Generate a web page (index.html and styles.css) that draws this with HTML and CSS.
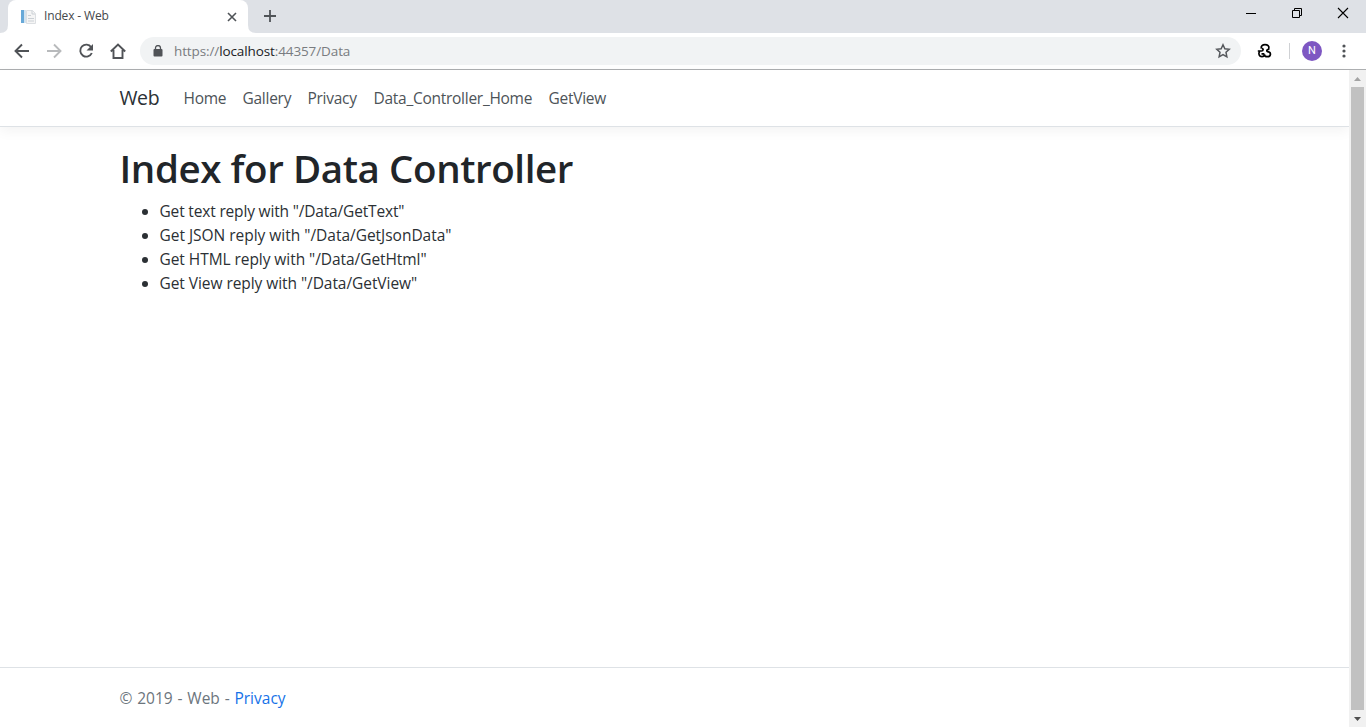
FILE: index.html
```html
<!DOCTYPE html>
<html lang="en">
<head>
<meta charset="utf-8">
<title>Index - Web</title>
<link rel="stylesheet" href="styles.css">
</head>
<body>
<div class="tabstrip">
  <svg class="foot" width="8" height="33"><path d="M0 33Q8 33 8 25V33Z" fill="#fff"/></svg>
  <div class="tab">
    <svg class="favicon" width="16" height="16" viewBox="0 0 16 16"><path d="M1 1h3v13H1z" fill="#68a9d8"/><path d="M4 1h2v13H4z" fill="#d3e3ef"/><path d="M6.500 1.500h6l3 3v10h-9z" fill="#f5f5f5" stroke="#dcdfe2"/><path d="M12 1.500v3.500h3M8 6.500h3M8 9.500h6M8 12h6" fill="none" stroke="#cbd0d5"/></svg>
    <span class="tab-title">Index - Web</span>
    <svg class="tab-close" width="10" height="10" viewBox="0 0 10 10"><path d="M1 1l8 8M9 1L1 9" stroke="#4f5357" stroke-width="1.6"/></svg>
  </div>
  <svg class="foot" width="8" height="33"><path d="M8 33Q0 33 0 25V33Z" fill="#fff"/></svg>
  <svg class="new-tab" width="12" height="12" viewBox="0 0 12 12"><path d="M6 0v12M0 6h12" stroke="#4f5357" stroke-width="1.8"/></svg>
  <div class="window-controls">
    <svg width="46" height="27" viewBox="0 0 46 27"><path d="M18 13.5h10" stroke="#000"/></svg>
    <svg width="46" height="27" viewBox="0 0 46 27"><path d="M18.500 10.500h7v7h-7zM20.500 10.500v-2h7v7h-2" fill="none" stroke="#000"/></svg>
    <svg width="46" height="27" viewBox="0 0 46 27"><path d="M18 8l10 10M28 8L18 18" stroke="#000" stroke-width="1.1"/></svg>
  </div>
</div>
<div class="toolbar">
  <svg class="tool" width="16" height="16" viewBox="0 0 16 16"><path d="M15 8H2M8 1.500L1.500 8 8 14.500" fill="none" stroke="#505357" stroke-width="1.900"/></svg>
  <svg class="tool" width="16" height="16" viewBox="0 0 16 16"><path d="M1 8h13M8 1.500L14.500 8 8 14.500" fill="none" stroke="#b8babc" stroke-width="1.900"/></svg>
  <svg class="tool" width="16" height="16" viewBox="0 0 16 16"><path d="M13.200 4.200A6 6 0 1 0 13.800 10" fill="none" stroke="#505357" stroke-width="1.900"/><path d="M15 1v6.500H8.500z" fill="#505357"/></svg>
  <svg class="tool" width="16" height="16" viewBox="0 0 16 16"><path d="M.8 8.500L8 1.500l7.200 7M3.500 7v8h9V7" fill="none" stroke="#505357" stroke-width="1.900"/></svg>
  <div class="address">
    <svg width="10" height="12" viewBox="0 0 10 12"><path d="M2.500 5V3a2.500 2.500 0 0 1 5 0v2" fill="none" stroke="#505357" stroke-width="1.300"/><rect x=".5" y="4" width="9" height="7.500" rx="1" fill="#505357"/></svg>
    <span class="url">https://<b>localhost</b>:44357/Data</span>
    <svg class="star" width="16" height="16" viewBox="0 0 16 16"><path d="M8 1.800l1.850 4.050 4.350.45-3.200 3 .85 4.500L8 11.500l-3.850 2.300.85-4.500-3.200-3 4.350-.45z" fill="none" stroke="#55585c" stroke-width="1.500"/></svg>
  </div>
  <svg class="extension" width="16" height="16" viewBox="0 0 16 16"><path d="M4.300 5.500C3.800 3 5.600 1.700 8 1.700S12.700 3 11.700 6M.8 8H4.500c2 0 2.200-2.600.2-2.600M2.600 8.500C1 10.500 2.200 13.600 4.900 13.600c1.700 0 2.500-1 2.500-2.400 0 1.600 1 2.500 2.900 2.500 3.800 0 4-4.200 1.200-4.800-2.500-.4-2.300-2.900.9-2.500M4.500 10.800h2.900" fill="none" stroke="#000" stroke-width="1.700"/></svg>
  <span class="divider"></span>
  <span class="avatar">N</span>
  <svg class="menu" width="4" height="16" viewBox="0 0 4 16"><g fill="#505357"><circle cx="2" cy="3" r="1.600"/><circle cx="2" cy="8" r="1.600"/><circle cx="2" cy="13" r="1.600"/></g></svg>
</div>
<div class="viewport">
  <div class="page">
    <nav class="navbar"><div class="container nav-row">
      <a class="brand">Web</a><a class="w43">Home</a><a class="w49">Gallery</a><a class="w50">Privacy</a><a class="w159">Data_Controller_Home</a><a>GetView</a>
    </div></nav>
    <main class="container">
      <h1>Index for Data Controller</h1>
      <ul>
        <li class="text-item">Get text reply with "/Data/GetText"</li>
        <li class="json-item">Get JSON reply with "/Data/GetJsonData"</li>
        <li>Get HTML reply with "/Data/GetHtml"</li>
        <li>Get View reply with "/Data/GetView"</li>
      </ul>
    </main>
    <footer><div class="container">© 2019 - Web - <a>Privacy</a></div></footer>
  </div>
  <div class="scrollbar">
    <svg width="17" height="17"><path d="M5 11h7L8.500 7z" fill="#a3a3a3"/></svg>
    <div class="thumb"></div>
    <svg width="17" height="17"><path d="M5 7h7l-3.500 4z" fill="#505050"/></svg>
  </div>
</div>
</body>
</html>
```
FILE: styles.css
```css
* { box-sizing: border-box; }
body { margin: 0; height: 727px; overflow: hidden; display: flex; flex-direction: column; font-family: "Open Sans", "Noto Sans", sans-serif; background: #fff; }
svg { display: block; flex: none; }
.tabstrip { height: 33px; flex: none; display: flex; background: #dee1e6; }
.tab { width: 240px; height: 33px; display: flex; align-items: center; padding: 0 11px 0 12px; background: #fff; border-radius: 8px 8px 0 0; }
.tab-title { margin: -2px 0 0 8px; font-size: 12px; letter-spacing: -.15px; color: #45484c; }
.tab-close { margin-left: auto; }
.new-tab { margin: 10px 0 0 8px; }
.window-controls { display: flex; margin-left: auto; }
.toolbar { height: 37px; flex: none; display: flex; align-items: center; padding: 0 20px 0 14px; border-bottom: 1px solid #adafb1; }
.tool { margin-right: 16px; }
.address { margin-left: -2px; width: 1101px; height: 28px; display: flex; align-items: center; padding: 0 10px 0 13px; border-radius: 14px; background: #f1f3f4; }
.url { margin: -1px 0 0 11px; font-size: 13.500px; letter-spacing: -.11px; color: #797c80; }
.url b { font-weight: 400; color: #202124; }
.star { margin-left: auto; }
.extension { margin-left: 16px; }
.divider { width: 1px; height: 16px; margin-left: 16px; background: #cfd1d4; }
.avatar { width: 20px; height: 20px; margin-left: 12px; border-radius: 50%; background: #7e57c2; color: #fff; font: 11px/20px Roboto, sans-serif; text-align: center; }
.menu { margin-left: auto; }
.viewport { flex: 1; display: flex; min-height: 0; }
.page { flex: 1; display: flex; flex-direction: column; font-size: 16px; line-height: 24px; color: #212529; }
.container { width: 1140px; margin: 0 auto; padding: 0 15px; }
.navbar { height: 57px; border-bottom: 1px solid #dee2e6; box-shadow: 0 4px 12px rgba(0,0,0,.05); }
.nav-row { display: flex; align-items: center; height: 56px; gap: 16px; white-space: nowrap; font-size: 15.500px; letter-spacing: -.27px; color: #4d5358; }
.brand { width: 48px; font-size: 19.500px; letter-spacing: -.4px; color: #2b3035; }
.w43 { width: 43px; }
.w49 { width: 49px; }
.w50 { width: 50px; }
.w159 { width: 159px; }
main { flex: 1; }
h1 { margin: 16px 0 8px; padding-top: 1px; font-size: 38.500px; letter-spacing: -.41px; line-height: 48px; font-weight: 600; height: 48px; white-space: nowrap; }
ul { margin: 0; padding-left: 40px; font-size: 15.500px; letter-spacing: -.06px; }
li { color: #2b3034; }
.text-item { letter-spacing: -.17px; }
.json-item { letter-spacing: -.02px; }
footer { height: 60px; border-top: 1px solid #dee2e6; line-height: 61px; color: #6c757d; font-size: 15.500px; word-spacing: .8px; }
footer a { color: #1672e8; }
.scrollbar { width: 17px; display: flex; flex-direction: column; align-items: center; background: #f1f1f1; }
.thumb { width: 13px; flex: 1; background: #c1c1c1; }
```
